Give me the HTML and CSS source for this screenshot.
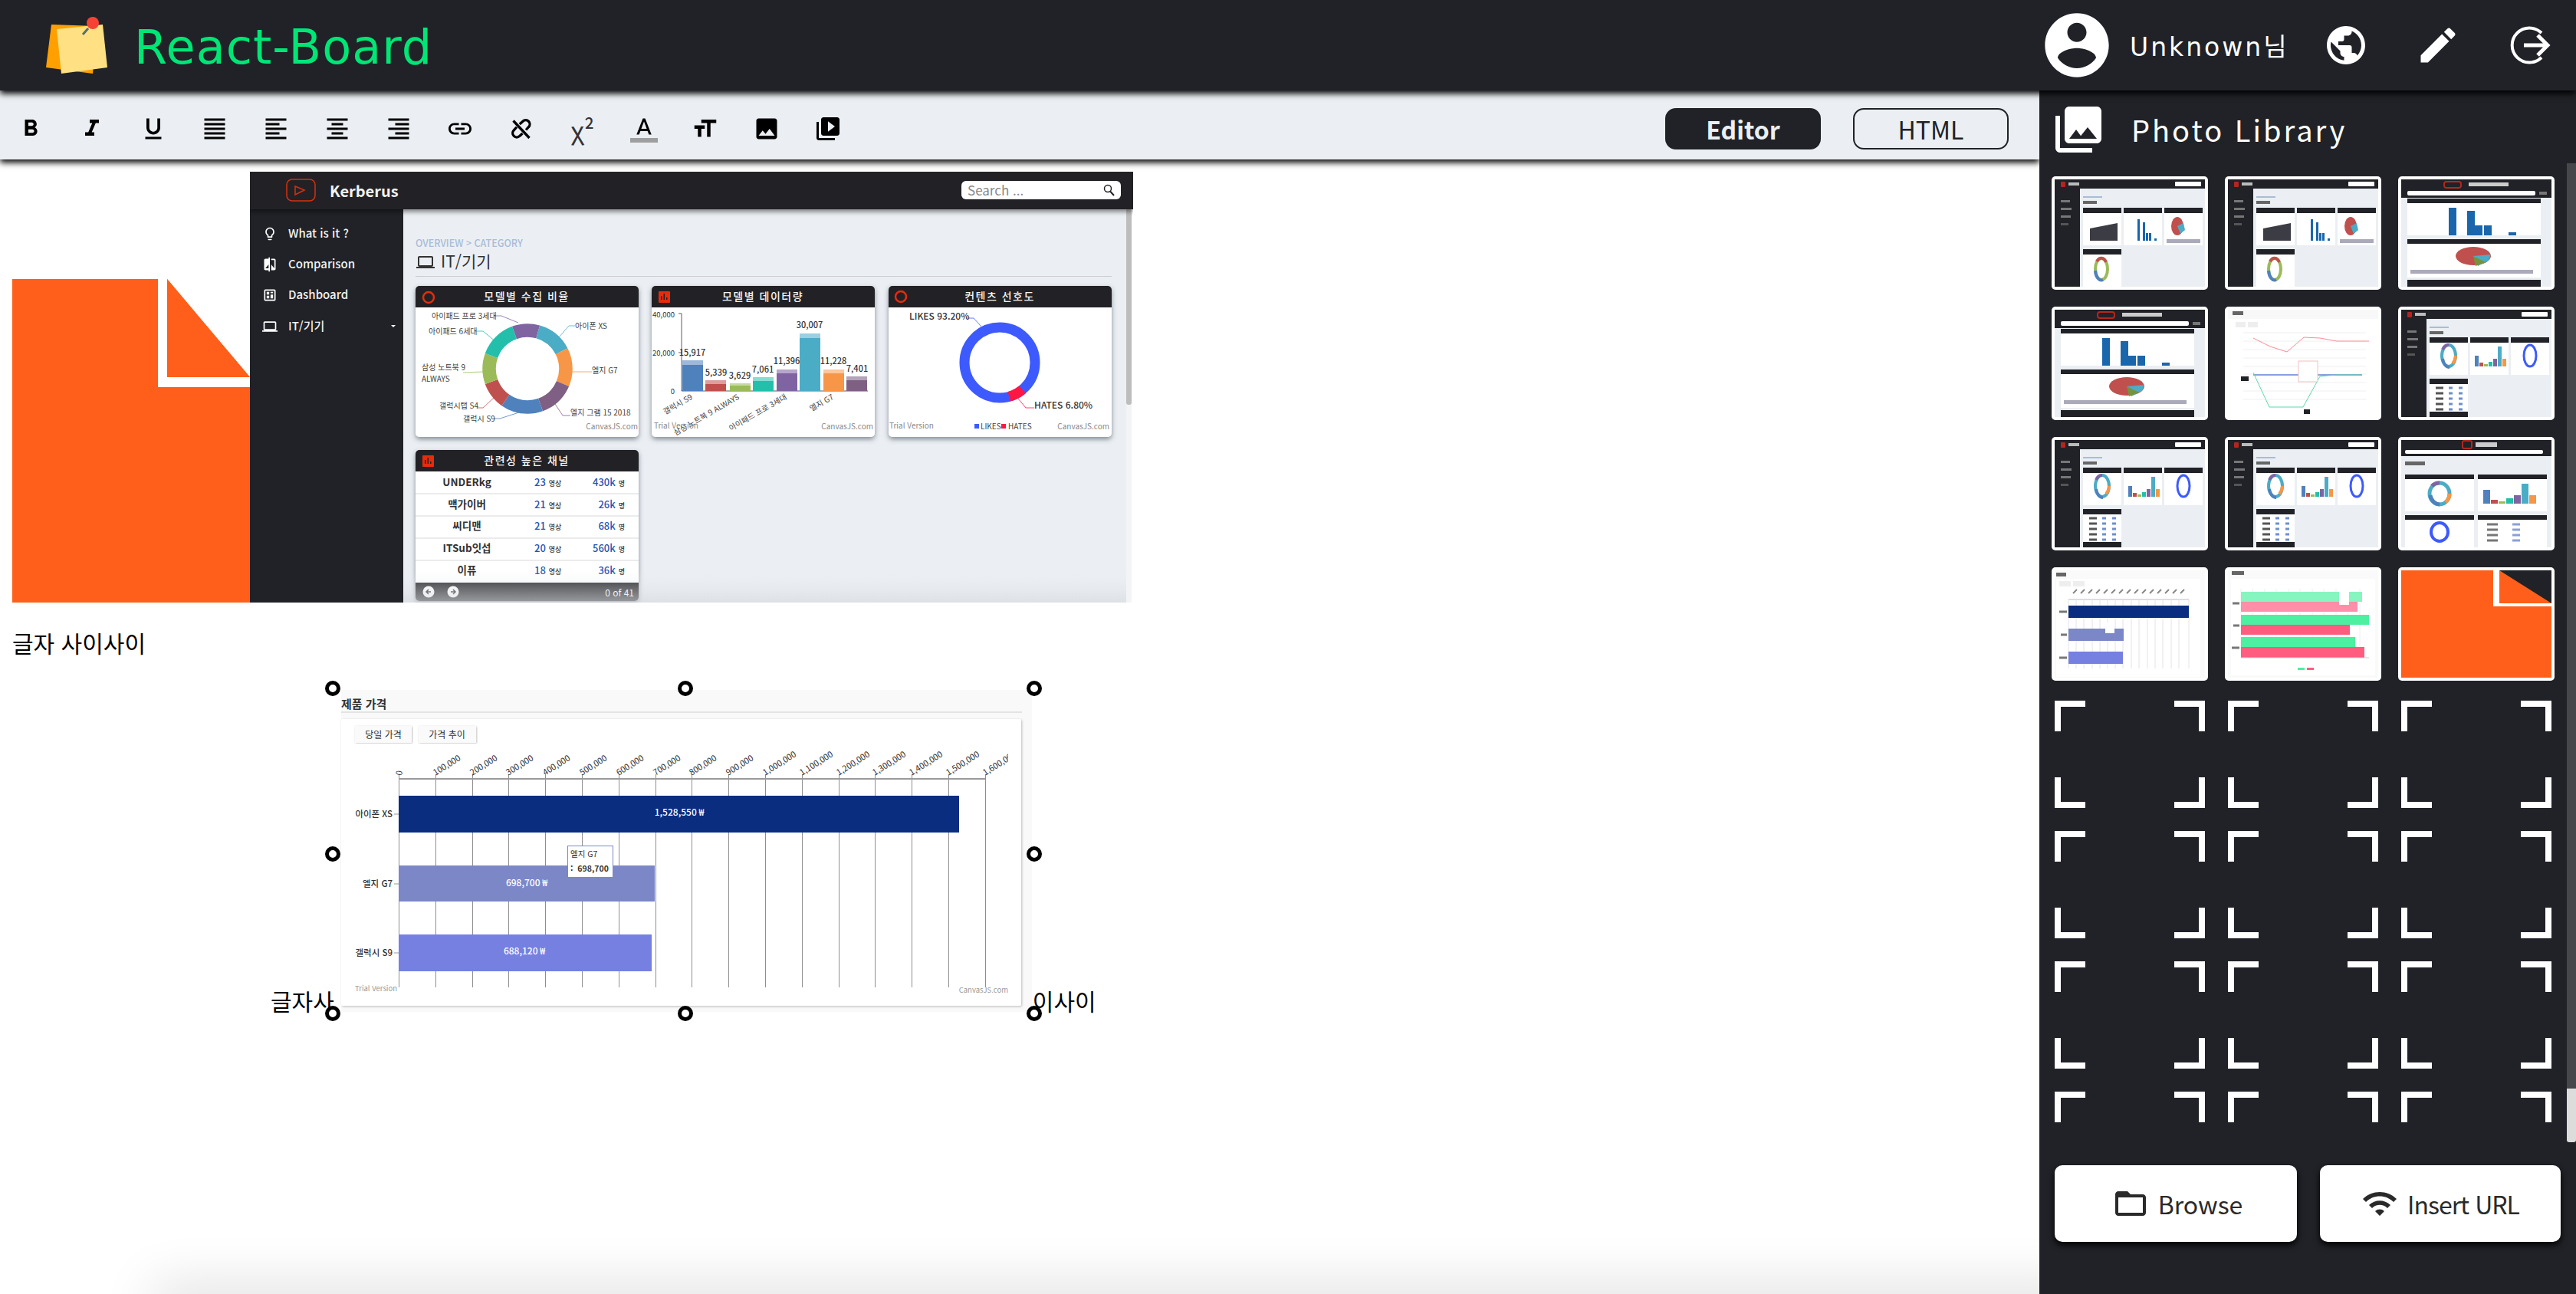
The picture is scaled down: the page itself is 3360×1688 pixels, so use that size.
FILE: index.html
```html
<!DOCTYPE html>
<html lang="ko">
<head>
    <meta charset="UTF-8">
    <title>React-Board</title>
    <link rel="stylesheet" href="styles.css">
</head>
<body>
    <!-- thumbnails and small icons, reused below -->
    <svg class="sprite" aria-hidden="true">
        <symbol id="i-bulb" viewBox="0 0 24 24"><path d="M9 21c0 .55.45 1 1 1h4c.55 0 1-.45 1-1v-1H9v1zm3-19C8.14 2 5 5.14 5 9c0 2.38 1.19 4.47 3 5.74V17c0 .55.45 1 1 1h6c.55 0 1-.45 1-1v-2.26c1.81-1.27 3-3.36 3-5.74 0-3.86-3.14-7-7-7zm2 11.7V16h-4v-2.3C8.48 12.63 7 11.53 7 9c0-2.76 2.24-5 5-5s5 2.24 5 5c0 2.49-1.51 3.65-3 4.7z"/></symbol>
        <symbol id="i-compare" viewBox="0 0 24 24"><path d="M10 3H5c-1.1 0-2 .9-2 2v14c0 1.1.9 2 2 2h5v2h2V1h-2v2zm0 15H5l5-6v6zm9-15h-5v2h5v13l-5-6v9h5c1.1 0 2-.9 2-2V5c0-1.1-.9-2-2-2z"/></symbol>
        <symbol id="i-dash" viewBox="0 0 24 24"><path d="M19 3H5c-1.1 0-2 .9-2 2v14c0 1.1.9 2 2 2h14c1.1 0 2-.9 2-2V5c0-1.1-.9-2-2-2zm0 16H5V5h14v14zM7 7h4v4H7zm6 0h4v2h-4zm0 4h4v6h-4zm-6 2h4v4H7z"/></symbol>
        <symbol id="i-laptop" viewBox="0 0 24 24"><path d="M20 18c1.1 0 2-.9 2-2V6c0-1.1-.9-2-2-2H4c-1.1 0-2 .9-2 2v10c0 1.1.9 2 2 2H0v2h24v-2h-4zM4 6h16v10H4V6z"/></symbol>

        <symbol id="t-shell" viewBox="0 0 196 140">
            <rect width="196" height="140" fill="#ebeff3"/>
            <rect width="33" height="140" fill="#202227"/>
            <rect width="196" height="12" fill="#202227"/>
            <rect x="8" y="3" width="6" height="7" rx="1" fill="#b3261e"/>
            <rect x="18" y="4" width="14" height="4" fill="#bbb"/>
            <rect x="157" y="3" width="34" height="6" rx="1" fill="#fff"/>
            <rect x="8" y="27" width="12" height="3" fill="#777"/>
            <rect x="8" y="37" width="14" height="3" fill="#777"/>
            <rect x="8" y="47" width="13" height="3" fill="#777"/>
            <rect x="8" y="57" width="10" height="3" fill="#555"/>
            <rect x="37" y="22" width="25" height="2" fill="#a9bcd8"/>
            <rect x="37" y="28" width="18" height="4" fill="#666"/>
        </symbol>
        <symbol id="t-dash" viewBox="0 0 196 140">
            <use href="#t-shell"/>
            <rect x="37" y="37" width="50" height="49" fill="#fff"/>
            <rect x="37" y="37" width="50" height="7" fill="#202227"/>
            <path d="M46 80V64l36-7v23z" fill="#3c3c44"/>
            <rect x="90" y="37" width="50" height="49" fill="#fff"/>
            <rect x="90" y="37" width="50" height="7" fill="#202227"/>
            <path d="M108 52h3v28h-3zM115 56h3v24h-3zM119 70h3v10h-3zM123 70h3v10h-3zM130 77h3v3h-3z" fill="#1a66ac"/>
            <rect x="143" y="37" width="50" height="49" fill="#fff"/>
            <rect x="143" y="37" width="50" height="7" fill="#202227"/>
            <ellipse cx="160" cy="61" rx="8" ry="12" fill="#c0504d"/>
            <path d="M160 61l8-4 2 9-6 5z" fill="#4bacc6"/>
            <rect x="146" y="78" width="44" height="5" fill="#aab"/>
            <rect x="37" y="91" width="50" height="49" fill="#fff"/>
            <rect x="37" y="91" width="50" height="7" fill="#202227"/>
            <ellipse cx="61" cy="117" rx="8" ry="14" fill="none" stroke="#9bbb59" stroke-width="4"/>
            <path d="M55 107a8 14 0 0 1 12 1" fill="none" stroke="#c0504d" stroke-width="4"/>
            <path d="M53 119a8 14 0 0 0 10 12" fill="none" stroke="#4f81bd" stroke-width="4"/>
        </symbol>
        <symbol id="t-mob" viewBox="0 0 196 140">
            <rect width="196" height="140" fill="#ebeff3"/>
            <rect width="196" height="24" fill="#202227"/>
            <rect x="56" y="3" width="22" height="8" rx="3" fill="none" stroke="#b3261e" stroke-width="2"/>
            <rect x="88" y="4" width="52" height="5" fill="#ccc"/>
            <rect x="8" y="15" width="167" height="6" rx="2" fill="#fff"/>
            <rect x="180" y="16" width="10" height="4" fill="#777"/>
            <rect x="8" y="25" width="174" height="48" fill="#fff"/>
            <rect x="8" y="25" width="174" height="6" fill="#202227"/>
            <path d="M62 37h10v36H62zM86 41h10v32H86zM96 60h10v13H96zM108 60h10v13h-10zM140 69h10v4h-10z" fill="#1a66ac"/>
            <rect x="8" y="78" width="174" height="50" fill="#fff"/>
            <rect x="8" y="78" width="174" height="6" fill="#202227"/>
            <ellipse cx="94" cy="100" rx="23" ry="12" fill="#c0504d"/>
            <path d="M94 100l23-2-3 8-14 7z" fill="#4bacc6"/>
            <path d="M94 100l16 8-13 5z" fill="#76923c"/>
            <rect x="12" y="118" width="160" height="5" fill="#aab"/>
            <rect x="8" y="131" width="174" height="9" fill="#202227"/>
        </symbol>
        <symbol id="t-line" viewBox="0 0 196 140">
            <rect width="196" height="140" fill="#fff"/>
            <rect width="196" height="12" fill="#f8f8f8"/>
            <rect x="6" y="2" width="14" height="5" fill="#666"/>
            <rect x="10" y="16" width="13" height="7" fill="#eee"/>
            <rect x="26" y="16" width="13" height="7" fill="#eee"/>
            <path d="M20 30h160M20 41h160M20 52h160M20 63h160M20 74h160M20 84h160M20 95h160M20 106h160M20 117h160" stroke="#f0f0f0"/>
            <path d="M33 37l22 11 22 7 22-19 21 1 22 4h42" fill="none" stroke="#ff8a96"/>
            <path d="M33 85h142" stroke="#8aa0e0" stroke-width="2"/>
            <path d="M33 82l21 45h44l22-40 21-2h34" fill="none" stroke="#60d6a8"/>
            <rect x="92" y="67" width="25" height="27" fill="#fff" stroke="#f4c0c0"/>
            <rect x="17" y="87" width="10" height="6" fill="#202227"/>
            <rect x="99" y="130" width="8" height="6" fill="#202227"/>
        </symbol>
        <symbol id="t-it" viewBox="0 0 196 140">
            <use href="#t-shell"/>
            <rect x="37" y="36" width="50" height="49" fill="#fff"/>
            <rect x="37" y="36" width="50" height="7" fill="#202227"/>
            <ellipse cx="62" cy="60" rx="9" ry="14" fill="none" stroke="#4bacc6" stroke-width="4"/>
            <path d="M54 64a9 14 0 0 0 9 11" fill="none" stroke="#4f81bd" stroke-width="4"/>
            <path d="M71 60a9 14 0 0 1-4 10" fill="none" stroke="#f79646" stroke-width="4"/>
            <path d="M54 52a9 14 0 0 1 8-6" fill="none" stroke="#8064a2" stroke-width="4"/>
            <rect x="90" y="36" width="50" height="49" fill="#fff"/>
            <rect x="90" y="36" width="50" height="7" fill="#202227"/>
            <path d="M96 60h5v14h-5z" fill="#4f81bd"/>
            <path d="M102 69h5v5h-5z" fill="#c0504d"/>
            <path d="M108 71h5v3h-5z" fill="#9bbb59"/>
            <path d="M114 68h5v6h-5z" fill="#23bfaa"/>
            <path d="M120 64h5v10h-5z" fill="#8064a2"/>
            <path d="M126 48h5v26h-5z" fill="#4bacc6"/>
            <path d="M132 64h5v10h-5z" fill="#f79646"/>
            <rect x="143" y="36" width="50" height="49" fill="#fff"/>
            <rect x="143" y="36" width="50" height="7" fill="#202227"/>
            <ellipse cx="168" cy="60" rx="8" ry="14" fill="none" stroke="#3d5afe" stroke-width="3"/>
            <rect x="37" y="90" width="50" height="50" fill="#fff"/>
            <rect x="37" y="90" width="50" height="7" fill="#202227"/>
            <path d="M45 102h10M45 109h10M45 116h10M45 123h10M45 130h10" stroke="#555" stroke-width="3"/>
            <path d="M62 102h5M62 109h5M62 116h5M62 123h5M62 130h5M75 102h5M75 109h5M75 116h5M75 123h5M75 130h5" stroke="#6d8fd0" stroke-width="3"/>
            <rect x="37" y="133" width="50" height="7" fill="#202227"/>
        </symbol>
        <symbol id="t-itm" viewBox="0 0 196 140">
            <rect width="196" height="140" fill="#ebeff3"/>
            <rect width="196" height="21" fill="#202227"/>
            <rect x="80" y="1" width="12" height="10" rx="2" fill="none" stroke="#b3261e" stroke-width="2"/>
            <rect x="97" y="3" width="28" height="6" fill="#ccc"/>
            <rect x="5" y="13" width="180" height="5" rx="2" fill="#fff"/>
            <rect x="5" y="28" width="26" height="5" fill="#666"/>
            <rect x="5" y="45" width="90" height="48" fill="#fff"/>
            <rect x="5" y="45" width="90" height="6" fill="#202227"/>
            <ellipse cx="50" cy="70" rx="13" ry="14" fill="none" stroke="#4bacc6" stroke-width="5"/>
            <path d="M38 72a13 14 0 0 0 12 12" fill="none" stroke="#4f81bd" stroke-width="5"/>
            <path d="M63 70a13 14 0 0 1-5 11" fill="none" stroke="#f79646" stroke-width="5"/>
            <path d="M40 60a13 14 0 0 1 10-4" fill="none" stroke="#8064a2" stroke-width="5"/>
            <rect x="100" y="45" width="90" height="48" fill="#fff"/>
            <rect x="100" y="45" width="90" height="6" fill="#202227"/>
            <path d="M107 65h9v18h-9z" fill="#4f81bd"/>
            <path d="M117 78h9v5h-9z" fill="#c0504d"/>
            <path d="M127 80h9v3h-9z" fill="#9bbb59"/>
            <path d="M137 76h9v7h-9z" fill="#23bfaa"/>
            <path d="M147 72h9v11h-9z" fill="#8064a2"/>
            <path d="M157 57h9v26h-9z" fill="#4bacc6"/>
            <path d="M167 72h9v11h-9z" fill="#f79646"/>
            <rect x="5" y="98" width="90" height="42" fill="#fff"/>
            <rect x="5" y="98" width="90" height="6" fill="#202227"/>
            <ellipse cx="50" cy="120" rx="11" ry="12" fill="none" stroke="#3d5afe" stroke-width="4"/>
            <rect x="100" y="98" width="90" height="42" fill="#fff"/>
            <rect x="100" y="98" width="90" height="6" fill="#202227"/>
            <path d="M112 110h14M112 117h14M112 124h14M112 131h14" stroke="#777" stroke-width="3"/>
            <path d="M145 110h10M145 117h10M145 124h10M145 131h10" stroke="#8aa0d8" stroke-width="3"/>
        </symbol>
        <symbol id="t-price" viewBox="0 0 196 140">
            <rect width="196" height="140" fill="#fafafa"/>
            <rect x="2" y="11" width="188" height="128" fill="#fff"/>
            <rect x="2" y="3" width="13" height="5" fill="#666"/>
            <rect x="6" y="14" width="15" height="7" fill="#eee"/>
            <rect x="24" y="14" width="15" height="7" fill="#eee"/>
            <path d="M18 38h157" stroke="#bbb"/>
            <path d="M18 38v90M28 38v90M38 38v90M49 38v90M59 38v90M69 38v90M79 38v90M89 38v90M100 38v90M110 38v90M121 38v90M131 38v90M141 38v90M152 38v90M162 38v90M175 38v90" stroke="#e4e4e4"/>
            <path d="M24 30l5-5M34 30l5-5M44 30l5-5M54 30l5-5M64 30l5-5M74 30l5-5M84 30l5-5M94 30l5-5M104 30l5-5M114 30l5-5M124 30l5-5M134 30l5-5M144 30l5-5M154 30l5-5M164 30l5-5" stroke="#888" stroke-width="2"/>
            <rect x="18" y="46" width="157" height="16" fill="#0a2d80"/>
            <rect x="18" y="76" width="72" height="16" fill="#7c87c8"/>
            <rect x="18" y="106" width="71" height="16" fill="#7680e0"/>
            <rect x="66" y="68" width="12" height="14" fill="#fff"/>
            <path d="M6 54h10M8 84h8M6 114h10" stroke="#777" stroke-width="3"/>
        </symbol>
        <symbol id="t-bars" viewBox="0 0 196 140">
            <rect width="196" height="140" fill="#fafafa"/>
            <rect x="4" y="11" width="188" height="126" fill="#fff"/>
            <rect x="5" y="1" width="16" height="5" fill="#666"/>
            <path d="M17 24v90M32 24v90M48 24v90M63 24v90M79 24v90M94 24v90M110 24v90M125 24v90M141 24v90M156 24v90M172 24v90" stroke="#eee"/>
            <rect x="17" y="28" width="158" height="13" fill="#86f5c0"/>
            <rect x="17" y="41" width="152" height="13" fill="#ff8fa8"/>
            <rect x="17" y="58" width="167" height="13" fill="#4cf0a0"/>
            <rect x="17" y="71" width="142" height="13" fill="#ff5c80"/>
            <rect x="17" y="87" width="149" height="13" fill="#4cf0a0"/>
            <rect x="17" y="100" width="161" height="14" fill="#ff5c80"/>
            <rect x="145" y="25" width="13" height="20" fill="#fff"/>
            <path d="M6 43h9M7 72h8M5 101h10" stroke="#777" stroke-width="3"/>
            <path d="M17 114h167" stroke="#ccc"/>
            <rect x="91" y="127" width="9" height="3" fill="#4cf0a0"/>
            <rect x="103" y="127" width="9" height="3" fill="#ff5c80"/>
        </symbol>
        <symbol id="t-file" viewBox="0 0 196 140" preserveAspectRatio="none">
            <rect width="196" height="140" fill="#ff5f1a"/>
            <path d="M120 0h8v43h68v4h-76z" fill="#fff"/>
            <path d="M128 0h68v43z" fill="#202227"/>
        </symbol>
    </svg>

    <header class="top-bar">
        <svg class="logo" viewBox="0 0 80 74">
            <path d="M7 10L0 66l61 8 5-62z" fill="#ffa000"/>
            <path d="M14 16l60-6 6 56-60 8z" fill="#ffe082"/>
            <path d="M55 15l-7 8" stroke="#546e7a" stroke-width="3"/>
            <ellipse cx="61" cy="8" rx="8" ry="8" fill="#f44336"/>
        </svg>
        <h1 class="brand">React-Board</h1>
        <div class="user-menu">
            <svg class="avatar" viewBox="0 0 24 24"><path d="M12 2C6.48 2 2 6.48 2 12s4.48 10 10 10 10-4.48 10-10S17.52 2 12 2zm0 3c1.66 0 3 1.34 3 3s-1.34 3-3 3-3-1.34-3-3 1.34-3 3-3zm0 14.2c-2.5 0-4.71-1.28-6-3.22.03-1.99 4-3.08 6-3.08 1.99 0 5.97 1.09 6 3.08-1.29 1.94-3.5 3.22-6 3.22z"/></svg>
            <span class="user-name">Unknown님</span>
            <svg class="menu-icon" viewBox="0 0 24 24"><path d="M12 2C6.48 2 2 6.48 2 12s4.48 10 10 10 10-4.48 10-10S17.52 2 12 2zm-1 17.93c-3.95-.49-7-3.85-7-7.93 0-.62.08-1.21.21-1.79L9 15v1c0 1.1.9 2 2 2v1.93zm6.9-2.54c-.26-.81-1-1.39-1.9-1.39h-1v-3c0-.55-.45-1-1-1H8v-2h2c.55 0 1-.45 1-1V7h2c1.1 0 2-.9 2-2v-.41c2.93 1.19 5 4.06 5 7.41 0 2.08-.8 3.97-2.1 5.39z"/></svg>
            <svg class="menu-icon" viewBox="0 0 24 24"><path d="M3 17.25V21h3.75L17.81 9.94l-3.75-3.75L3 17.25zM20.71 7.04c.39-.39.39-1.02 0-1.41l-2.34-2.34c-.39-.39-1.02-.39-1.41 0l-1.83 1.83 3.75 3.75 1.83-1.83z"/></svg>
            <svg class="menu-icon" viewBox="0 0 60 60"><path d="M45 14A22.5 22.5 0 1 0 45 46" fill="none" stroke="#fff" stroke-width="4"/><path d="M22 30h30M40 17l13 13-13 13" fill="none" stroke="#fff" stroke-width="5"/></svg>
        </div>
    </header>

    <main class="workspace">
        <section class="editor">
            <div class="toolbar">
                <div class="tools">
                    <svg class="tool" viewBox="0 0 24 24"><path d="M15.6 10.79c.97-.67 1.65-1.77 1.65-2.79 0-2.26-1.75-4-4-4H7v14h7.04c2.09 0 3.71-1.7 3.71-3.79 0-1.52-.86-2.82-2.15-3.42zM10 6.5h3c.83 0 1.5.67 1.5 1.5s-.67 1.5-1.5 1.5h-3v-3zm3.5 9H10v-3h3.5c.83 0 1.5.67 1.5 1.5s-.67 1.5-1.5 1.5z"/></svg>
                    <svg class="tool" viewBox="0 0 24 24"><path d="M10 4v3h2.21l-3.42 8H6v3h8v-3h-2.21l3.42-8H18V4z"/></svg>
                    <svg class="tool" viewBox="0 0 24 24"><path d="M12 17c3.31 0 6-2.69 6-6V3h-2.5v8c0 1.93-1.57 3.5-3.5 3.5S8.5 12.93 8.5 11V3H6v8c0 3.31 2.69 6 6 6zm-7 2v2h14v-2H5z"/></svg>
                    <svg class="tool" viewBox="0 0 24 24"><path d="M3 21h18v-2H3v2zm0-4h18v-2H3v2zm0-4h18v-2H3v2zm0-4h18V7H3v2zm0-6v2h18V3H3z"/></svg>
                    <svg class="tool" viewBox="0 0 24 24"><path d="M15 15H3v2h12v-2zm0-8H3v2h12V7zM3 13h18v-2H3v2zm0 8h18v-2H3v2zM3 3v2h18V3H3z"/></svg>
                    <svg class="tool" viewBox="0 0 24 24"><path d="M7 15v2h10v-2H7zm-4 6h18v-2H3v2zm0-8h18v-2H3v2zm4-6v2h10V7H7zM3 3v2h18V3H3z"/></svg>
                    <svg class="tool" viewBox="0 0 24 24"><path d="M3 21h18v-2H3v2zm6-4h12v-2H9v2zm-6-4h18v-2H3v2zm6-4h12V7H9v2zM3 3v2h18V3H3z"/></svg>
                    <svg class="tool" viewBox="0 0 24 24"><path d="M3.9 12c0-1.71 1.39-3.1 3.1-3.1h4V7H7c-2.76 0-5 2.24-5 5s2.24 5 5 5h4v-1.9H7c-1.71 0-3.1-1.39-3.1-3.1zM8 13h8v-2H8v2zm9-6h-4v1.9h4c1.71 0 3.1 1.39 3.1 3.1s-1.39 3.1-3.1 3.1h-4V17h4c2.76 0 5-2.24 5-5s-2.24-5-5-5z"/></svg>
                    <svg class="tool" viewBox="0 0 24 24"><path d="M5 5l14 15M10.5 8l2.800-2.500a3.500 3.500 0 0 1 5 5l-2.300 2.500M8 10.500l-2.500 2.800a3.500 3.500 0 0 0 5 5l2.500-2.300" fill="none" stroke="#000" stroke-width="2.200"/></svg>
                    <span class="tool tool-text">χ²</span>
                    <svg class="tool" viewBox="0 0 24 24"><path d="M11 3L5.500 17h2.250l1.120-3h6.250l1.120 3h2.250L13 3h-2zm-1.380 9L12 5.670 14.380 12H9.620z"/><rect y="20" width="24" height="4" fill="#9e9e9e"/></svg>
                    <svg class="tool" viewBox="0 0 24 24"><path d="M21.500 4v3h-5v12h-3V7h-5V4h13zm-19 5h9v3h-3v7h-3v-7h-3V9z"/></svg>
                    <svg class="tool" viewBox="0 0 24 24"><path d="M21 19V5c0-1.100-.9-2-2-2H5c-1.100 0-2 .9-2 2v14c0 1.100.9 2 2 2h14c1.100 0 2-.9 2-2zM8.500 13.500l2.500 3.010L14.500 12l4.500 6H5l3.500-4.500z"/></svg>
                    <svg class="tool" viewBox="0 0 24 24"><path d="M4 6H2v14c0 1.100.9 2 2 2h14v-2H4V6zm16-4H8c-1.100 0-2 .9-2 2v12c0 1.100.9 2 2 2h12c1.100 0 2-.9 2-2V4c0-1.100-.9-2-2-2zm-8 12.500v-9l6 4.500-6 4.500z"/></svg>
                </div>
                <div class="mode-switch">
                    <button class="mode mode-on">Editor</button>
                    <button class="mode">HTML</button>
                </div>
            </div>

            <div class="document">
                <div class="image-row">
                    <svg class="file-image" viewBox="0 0 310 422">
                        <rect width="310" height="422" fill="#ff5f1a"/>
                        <path d="M190 0h12v128h108v13H190z" fill="#fff"/>
                        <path d="M202 0h108v128z" fill="#fff"/>
                        <path d="M202 0l108 128H202z" fill="#ff5f1a"/>
                    </svg>
                    <svg class="shot" viewBox="0 0 1152 562">
                        <defs>
                            <linearGradient id="shot-fade" x1="0" y1="0" x2="0" y2="1"><stop offset="0" stop-color="#ebeff3" stop-opacity="0"/><stop offset="1" stop-color="#d5d8dc"/></linearGradient>
                            <filter id="card-shadow" x="-5%" y="-5%" width="110%" height="115%"><feDropShadow dx="0" dy="3" stdDeviation="3" flood-color="#3a4654" flood-opacity=".6"/></filter>
                            <filter id="bar-shadow" x="-2%" y="-20%" width="104%" height="160%"><feDropShadow dx="0" dy="3" stdDeviation="3" flood-color="#000" flood-opacity=".5"/></filter>
                        </defs>
                        <rect width="1152" height="564" fill="#fff"/>
                        <rect x="200" width="943" height="564" fill="#ebeff3"/>
                        <rect x="1143" y="48" width="7" height="516" fill="#f3f4f5"/>
                        <rect x="1143" y="48" width="7" height="256" rx="3" fill="#bdbdbd"/>
                        <rect y="0" width="200" height="564" fill="#202227"/>

                        <text class="kb-nav" x="50" y="86">What is it ?</text>
                        <text class="kb-nav" x="50" y="126">Comparison</text>
                        <text class="kb-nav" x="50" y="166">Dashboard</text>
                        <text class="kb-nav" x="50" y="207">IT/기기</text>
                        <use href="#i-bulb" x="16" y="71" width="20" height="20" fill="#fff"/>
                        <use href="#i-compare" x="16" y="111" width="20" height="20" fill="#fff"/>
                        <use href="#i-dash" x="16" y="151" width="20" height="20" fill="#fff"/>
                        <use href="#i-laptop" x="16" y="192" width="20" height="20" fill="#fff"/>
                        <path d="M184 200h6l-3 3z" fill="#fff"/>

                        <text class="kb-crumb" x="216" y="98">OVERVIEW &gt; CATEGORY</text>
                        <use href="#i-laptop" x="217" y="106" width="24" height="24" fill="#333"/>
                        <text class="kb-title" x="249" y="125">IT/기기</text>
                        <rect x="216" y="136" width="908" height="1" fill="#c9ccd0"/>

                        <!-- donut card -->
                        <g filter="url(#card-shadow)">
                            <rect x="216" y="149" width="291" height="197" rx="5" fill="#fff"/>
                            <path d="M216 177v-23a5 5 0 0 1 5-5h281a5 5 0 0 1 5 5v23z" fill="#202227"/>
                        </g>
                        <circle cx="233" cy="164" r="7" fill="none" stroke="#e62c0c" stroke-width="2.500"/>
                        <text class="kb-head" x="361" y="168">모델별 수집 비율</text>
                        <g fill="none" stroke-width="17.500" transform="rotate(-90 362 257)">
                            <circle cx="362" cy="257" r="50" pathLength="360" stroke="#8064a2" stroke-dasharray="36 324" stroke-dashoffset="20"/>
                            <circle cx="362" cy="257" r="50" pathLength="360" stroke="#4bacc6" stroke-dasharray="47 313" stroke-dashoffset="-16"/>
                            <circle cx="362" cy="257" r="50" pathLength="360" stroke="#f79646" stroke-dasharray="50 310" stroke-dashoffset="-63"/>
                            <circle cx="362" cy="257" r="50" pathLength="360" stroke="#7f6084" stroke-dasharray="47 313" stroke-dashoffset="-113"/>
                            <circle cx="362" cy="257" r="50" pathLength="360" stroke="#4f81bd" stroke-dasharray="55 305" stroke-dashoffset="-160"/>
                            <circle cx="362" cy="257" r="50" pathLength="360" stroke="#c0504d" stroke-dasharray="35 325" stroke-dashoffset="-215"/>
                            <circle cx="362" cy="257" r="50" pathLength="360" stroke="#9bbb59" stroke-dasharray="40 320" stroke-dashoffset="-250"/>
                            <circle cx="362" cy="257" r="50" pathLength="360" stroke="#23bfaa" stroke-dasharray="50 310" stroke-dashoffset="-290"/>
                        </g>
                        <g fill="none" stroke-width=".8">
                            <path d="M318 188h10l22 9" stroke="#8064a2"/>
                            <path d="M294 208h10l17 14" stroke="#23bfaa"/>
                            <path d="M278 262l26-1" stroke="#9bbb59"/>
                            <path d="M296 308h8l15-14" stroke="#c0504d"/>
                            <path d="M318 322h8l25-8" stroke="#4f81bd"/>
                            <path d="M424 201h-8l-13 15" stroke="#4bacc6"/>
                            <path d="M446 261h-26" stroke="#f79646"/>
                            <path d="M418 318h-10l-10-15" stroke="#7f6084"/>
                        </g>
                        <text class="kb-tiny" x="237" y="192">아이패드 프로 3세대</text>
                        <text class="kb-tiny" x="233" y="212">아이패드 6세대</text>
                        <text class="kb-tiny" x="224" y="259">삼성 노트북 9</text>
                        <text class="kb-tiny" x="224" y="274">ALWAYS</text>
                        <text class="kb-tiny" x="247" y="309">갤럭시탭 S4</text>
                        <text class="kb-tiny" x="278" y="326">갤럭시 S9</text>
                        <text class="kb-tiny" x="424" y="205">아이폰 XS</text>
                        <text class="kb-tiny" x="446" y="263">엘지 G7</text>
                        <text class="kb-tiny" x="418" y="318">엘지 그램 15 2018</text>
                        <text class="kb-mark kb-end" x="506" y="336">CanvasJS.com</text>

                        <!-- bars card -->
                        <g filter="url(#card-shadow)">
                            <rect x="524" y="149" width="291" height="197" rx="5" fill="#fff"/>
                            <path d="M524 177v-23a5 5 0 0 1 5-5h281a5 5 0 0 1 5 5v23z" fill="#202227"/>
                        </g>
                        <rect x="533" y="156" width="15" height="15" rx="1" fill="#e62c0c"/>
                        <path d="M536 167v-5h1.500v5zM539.500 167v-8h1.500v8zM543 167v-3h1.500v3z" fill="#202227"/>
                        <text class="kb-head" x="669" y="168">모델별 데이터량</text>
                        <path d="M563 185v101h243M559 185h4M559 236h4" fill="none" stroke="#333" stroke-width=".8"/>
                        <rect x="564" y="246" width="27" height="40" fill="#4f81bd"/><rect x="564" y="246" width="27" height="6" fill="#9db8da"/>
                        <rect x="594" y="272" width="27" height="14" fill="#c0504d"/><rect x="594" y="272" width="27" height="5" fill="#dc9f9d"/>
                        <rect x="626" y="276" width="27" height="10" fill="#9bbb59"/><rect x="626" y="276" width="27" height="3" fill="#c6d99f"/>
                        <rect x="656" y="268" width="27" height="18" fill="#23bfaa"/><rect x="656" y="268" width="27" height="5" fill="#86dccf"/>
                        <rect x="687" y="258" width="27" height="28" fill="#8064a2"/><rect x="687" y="258" width="27" height="5" fill="#b7a5cb"/>
                        <rect x="717" y="211" width="27" height="75" fill="#4bacc6"/><rect x="717" y="211" width="27" height="6" fill="#9ad0df"/>
                        <rect x="748" y="258" width="27" height="28" fill="#f79646"/><rect x="748" y="258" width="27" height="5" fill="#fbc79d"/>
                        <rect x="778" y="267" width="27" height="19" fill="#7f6084"/><rect x="778" y="267" width="27" height="5" fill="#b4a3b8"/>
                        <text class="kb-tick kb-end" x="554" y="190">40,000</text>
                        <text class="kb-tick kb-end" x="554" y="240">20,000</text>
                        <text class="kb-tick kb-end" x="554" y="290">0</text>
                        <text class="kb-val" x="577" y="240">15,917</text>
                        <text class="kb-val" x="608" y="266">5,339</text>
                        <text class="kb-val" x="639" y="270">3,629</text>
                        <text class="kb-val" x="669" y="262">7,061</text>
                        <text class="kb-val" x="700" y="251">11,396</text>
                        <text class="kb-val" x="730" y="204">30,007</text>
                        <text class="kb-val" x="761" y="251">11,228</text>
                        <text class="kb-val" x="792" y="261">7,401</text>
                        <text class="kb-tiny kb-end" transform="translate(578 296) rotate(-30)">갤럭시 S9</text>
                        <text class="kb-tiny kb-end" transform="translate(639 296) rotate(-30)">삼성 노트북 9 ALWAYS</text>
                        <text class="kb-tiny kb-end" transform="translate(701 296) rotate(-30)">아이패드 프로 3세대</text>
                        <text class="kb-tiny kb-end" transform="translate(762 296) rotate(-30)">엘지 G7</text>
                        <text class="kb-mark" x="527" y="335">Trial Version</text>
                        <text class="kb-mark kb-end" x="813" y="336">CanvasJS.com</text>

                        <!-- likes card -->
                        <g filter="url(#card-shadow)">
                            <rect x="833" y="149" width="291" height="197" rx="5" fill="#fff"/>
                            <path d="M833 177v-23a5 5 0 0 1 5-5h281a5 5 0 0 1 5 5v23z" fill="#202227"/>
                        </g>
                        <circle cx="849" cy="163" r="7" fill="none" stroke="#e62c0c" stroke-width="2.500"/>
                        <text class="kb-head" x="978" y="168">컨텐츠 선호도</text>
                        <circle cx="978" cy="249" r="46" fill="none" stroke="#3d5afe" stroke-width="13"/>
                        <circle cx="978" cy="249" r="46" fill="none" stroke="#ff1744" stroke-width="13" pathLength="360" stroke-dasharray="24.500 335.500" stroke-dashoffset="-140" transform="rotate(-90 978 249)"/>
                        <path d="M934 191h10l10 11" fill="none" stroke="#3d5afe" stroke-width=".8"/>
                        <path d="M1002 296l10 12h11" fill="none" stroke="#ff1744" stroke-width=".8"/>
                        <text class="kb-val kb-start" x="860" y="193">LIKES 93.20%</text>
                        <text class="kb-val kb-start" x="1023" y="309">HATES 6.80%</text>
                        <rect x="945" y="329" width="6" height="6" fill="#3d5afe"/>
                        <text class="kb-tiny" x="953" y="336">LIKES</text>
                        <rect x="980" y="329" width="6" height="6" fill="#ff1744"/>
                        <text class="kb-tiny" x="989" y="336">HATES</text>
                        <text class="kb-mark" x="834" y="335">Trial Version</text>
                        <text class="kb-mark kb-end" x="1121" y="336">CanvasJS.com</text>

                        <!-- channel table -->
                        <g filter="url(#card-shadow)">
                            <rect x="216" y="363" width="291" height="197" rx="5" fill="#fff"/>
                            <path d="M216 391v-23a5 5 0 0 1 5-5h281a5 5 0 0 1 5 5v23z" fill="#202227"/>
                            <path d="M216 536h291v19a5 5 0 0 1-5 5H221a5 5 0 0 1-5-5z" fill="#202227"/>
                        </g>
                        <rect x="225" y="370" width="15" height="15" rx="1" fill="#e62c0c"/>
                        <path d="M228 381v-5h1.500v5zM231.500 381v-8h1.500v8zM235 381v-3h1.500v3z" fill="#202227"/>
                        <text class="kb-head" x="361" y="382">관련성 높은 채널</text>
                        <path d="M216 420h291M216 449h291M216 478h291M216 507h291" stroke="#d8d8d8"/>
                        <text class="kb-name" x="283" y="410">UNDERkg</text>
                        <text class="kb-name" x="283" y="439">맥가이버</text>
                        <text class="kb-name" x="283" y="467">씨디맨</text>
                        <text class="kb-name" x="283" y="496">ITSub잇섭</text>
                        <text class="kb-name" x="283" y="525">이퓨</text>
                        <text class="kb-count" x="371" y="410">23<tspan class="kb-unit" dx="4">영상</tspan></text>
                        <text class="kb-count" x="371" y="439">21<tspan class="kb-unit" dx="4">영상</tspan></text>
                        <text class="kb-count" x="371" y="467">21<tspan class="kb-unit" dx="4">영상</tspan></text>
                        <text class="kb-count" x="371" y="496">20<tspan class="kb-unit" dx="4">영상</tspan></text>
                        <text class="kb-count" x="371" y="525">18<tspan class="kb-unit" dx="4">영상</tspan></text>
                        <text class="kb-count kb-end" x="489" y="410">430k<tspan class="kb-unit" dx="4">명</tspan></text>
                        <text class="kb-count kb-end" x="489" y="439">26k<tspan class="kb-unit" dx="4">명</tspan></text>
                        <text class="kb-count kb-end" x="489" y="467">68k<tspan class="kb-unit" dx="4">명</tspan></text>
                        <text class="kb-count kb-end" x="489" y="496">560k<tspan class="kb-unit" dx="4">명</tspan></text>
                        <text class="kb-count kb-end" x="489" y="525">36k<tspan class="kb-unit" dx="4">명</tspan></text>
                        <circle cx="233" cy="548" r="7.500" fill="#fff"/>
                        <path d="M230 548h6M233 545l-3 3 3 3" fill="none" stroke="#202227" stroke-width="1.500"/>
                        <circle cx="265" cy="548" r="7.500" fill="#fff"/>
                        <path d="M262 548h6M265 545l3 3-3 3" fill="none" stroke="#202227" stroke-width="1.500"/>
                        <text class="kb-page kb-end" x="501" y="554">0 of 41</text>

                        <rect x="200" y="520" width="943" height="44" fill="url(#shot-fade)" opacity=".7"/>

                        <g filter="url(#bar-shadow)"><rect width="1152" height="49" fill="#202227"/></g>
                        <g fill="none" stroke="#d6300f" stroke-width="1.500">
                            <rect x="48" y="10" width="37" height="28" rx="7"/>
                            <path d="M59 19l12 5-12 6z"/>
                        </g>
                        <text class="kb-logo" x="104" y="33">Kerberus</text>
                        <rect x="928" y="12" width="208" height="24" rx="6" fill="#fff"/>
                        <text class="kb-search" x="936" y="31">Search ...</text>
                        <circle cx="1119" cy="22" r="4.500" fill="none" stroke="#222" stroke-width="1.500"/>
                        <path d="M1122 25.500l5 5.500" stroke="#222" stroke-width="2"/>
                    </svg>
                </div>

                <p class="line">글자 사이사이</p>

                <p class="wrapped">글자사<span class="selected-image">
                    <svg class="chart" viewBox="0 0 911 424">
                        <defs>
                            <clipPath id="chart-top"><rect x="0" y="70" width="879" height="60"/></clipPath>
                            <filter id="soft-shadow" x="-2%" y="-2%" width="104%" height="104%"><feDropShadow dx="1" dy="1" stdDeviation="1.500" flood-color="#000" flood-opacity=".25"/></filter>
                        </defs>
                        <rect x="9" y="2" width="901" height="420" fill="#f9f9f9"/>
                        <text class="ch-title" x="9" y="26">제품 가격</text>
                        <rect x="9" y="30" width="888" height="2" fill="#e4e4e4"/>
                        <rect x="9" y="40" width="887" height="374" rx="2" fill="#fff" filter="url(#soft-shadow)"/>
                        <rect x="27" y="49" width="74" height="22" fill="#fafafa" filter="url(#soft-shadow)"/>
                        <rect x="110" y="49" width="75" height="22" fill="#fafafa" filter="url(#soft-shadow)"/>
                        <text class="ch-btn" x="64" y="65">당일 가격</text>
                        <text class="ch-btn" x="147" y="65">가격 추이</text>

                        <path class="ch-grid" d="M84 112v278M132 112v278M180 112v278M227 112v278M275 112v278M323 112v278M371 112v278M419 112v278M466 112v278M514 112v278M562 112v278M610 112v278M658 112v278M705 112v278M753 112v278M801 112v278M849 112v278"/>
                        <rect x="84" y="117" width="765" height="2" fill="#9a9a9a"/>

                        <g clip-path="url(#chart-top)">
                            <text class="ch-tick" transform="translate(88 114) rotate(-80)">0</text>
                            <text class="ch-tick" transform="translate(132 114) rotate(-32)">100,000</text>
                            <text class="ch-tick" transform="translate(180 114) rotate(-32)">200,000</text>
                            <text class="ch-tick" transform="translate(227 114) rotate(-32)">300,000</text>
                            <text class="ch-tick" transform="translate(275 114) rotate(-32)">400,000</text>
                            <text class="ch-tick" transform="translate(323 114) rotate(-32)">500,000</text>
                            <text class="ch-tick" transform="translate(371 114) rotate(-32)">600,000</text>
                            <text class="ch-tick" transform="translate(419 114) rotate(-32)">700,000</text>
                            <text class="ch-tick" transform="translate(466 114) rotate(-32)">800,000</text>
                            <text class="ch-tick" transform="translate(514 114) rotate(-32)">900,000</text>
                            <text class="ch-tick" transform="translate(562 114) rotate(-32)">1,000,000</text>
                            <text class="ch-tick" transform="translate(610 114) rotate(-32)">1,100,000</text>
                            <text class="ch-tick" transform="translate(658 114) rotate(-32)">1,200,000</text>
                            <text class="ch-tick" transform="translate(705 114) rotate(-32)">1,300,000</text>
                            <text class="ch-tick" transform="translate(753 114) rotate(-32)">1,400,000</text>
                            <text class="ch-tick" transform="translate(801 114) rotate(-32)">1,500,000</text>
                            <text class="ch-tick" transform="translate(849 114) rotate(-32)">1,600,000</text>
                        </g>

                        <rect x="84" y="140" width="731" height="48" fill="#0a2d80"/>
                        <rect x="84" y="231" width="334" height="47" fill="#7c87c8"/>
                        <rect x="84" y="321" width="330" height="48" fill="#7680e0"/>
                        <text class="ch-bar" x="450" y="166">1,528,550 ₩</text>
                        <text class="ch-bar" x="251" y="258">698,700 ₩</text>
                        <text class="ch-bar" x="248" y="347">688,120 ₩</text>
                        <path d="M78 164h6M78 255h6M78 345h6" stroke="#999"/>
                        <text class="ch-label" x="76" y="168">아이폰 XS</text>
                        <text class="ch-label" x="76" y="259">엘지 G7</text>
                        <text class="ch-label" x="76" y="349">갤럭시 S9</text>

                        <rect x="304.500" y="205.500" width="59" height="41" fill="#fff" stroke="#7c87c8"/>
                        <text class="ch-tip" x="308" y="220">엘지 G7</text>
                        <text class="ch-tip ch-tip-bold" x="308" y="239">: &#160;698,700</text>

                        <text class="ch-mark" x="27" y="395">Trial Version</text>
                        <text class="ch-mark ch-mark-end" x="879" y="397">CanvasJS.com</text>
                    </svg>
                    <i class="handle h-tl"></i><i class="handle h-tc"></i><i class="handle h-tr"></i>
                    <i class="handle h-ml"></i><i class="handle h-mr"></i>
                    <i class="handle h-bl"></i><i class="handle h-bc"></i><i class="handle h-br"></i>
                </span>이사이</p>
            </div>
            <div class="bottom-glow"></div>
        </section>

        <aside class="library">
            <div class="library-head">
                <svg class="library-icon" viewBox="0 0 24 24"><path d="M22 16V4c0-1.100-.9-2-2-2H8c-1.100 0-2 .9-2 2v12c0 1.100.9 2 2 2h12c1.100 0 2-.9 2-2zm-11-4l2.030 2.710L16 11l4 5H8l3-4zM2 6v14c0 1.100.9 2 2 2h14v-2H4V6H2z"/></svg>
                <h2 class="library-title">Photo Library</h2>
            </div>
            <div class="library-body">
                <div class="thumbs">
                    <div class="thumb"><svg viewBox="0 0 196 140"><use href="#t-dash"/></svg></div>
                    <div class="thumb"><svg viewBox="0 0 196 140"><use href="#t-dash"/></svg></div>
                    <div class="thumb"><svg viewBox="0 0 196 140"><use href="#t-mob"/></svg></div>
                    <div class="thumb"><svg viewBox="0 0 196 140"><use href="#t-mob"/></svg></div>
                    <div class="thumb"><svg viewBox="0 0 196 140"><use href="#t-line"/></svg></div>
                    <div class="thumb"><svg viewBox="0 0 196 140"><use href="#t-it"/></svg></div>
                    <div class="thumb"><svg viewBox="0 0 196 140"><use href="#t-it"/></svg></div>
                    <div class="thumb"><svg viewBox="0 0 196 140"><use href="#t-it"/></svg></div>
                    <div class="thumb"><svg viewBox="0 0 196 140"><use href="#t-itm"/></svg></div>
                    <div class="thumb"><svg viewBox="0 0 196 140"><use href="#t-price"/></svg></div>
                    <div class="thumb"><svg viewBox="0 0 196 140"><use href="#t-bars"/></svg></div>
                    <div class="thumb"><svg viewBox="0 0 196 140"><use href="#t-file"/></svg></div>
                    <div class="thumb-empty"></div><div class="thumb-empty"></div><div class="thumb-empty"></div>
                    <div class="thumb-empty"></div><div class="thumb-empty"></div><div class="thumb-empty"></div>
                    <div class="thumb-empty"></div><div class="thumb-empty"></div><div class="thumb-empty"></div>
                    <div class="thumb-empty"></div><div class="thumb-empty"></div><div class="thumb-empty"></div>
                </div>
                <div class="scrollbar"><div class="scrollbar-thumb"></div></div>
            </div>
            <div class="library-actions">
                <button class="action action-browse">
                    <svg viewBox="0 0 24 24"><path d="M20 6h-8l-2-2H4c-1.100 0-1.990.9-1.990 2L2 18c0 1.100.9 2 2 2h16c1.100 0 2-.9 2-2V8c0-1.100-.9-2-2-2zm0 12H4V8h16v10z"/></svg>
                    Browse
                </button>
                <button class="action action-url">
                    <svg viewBox="0 0 24 24"><path d="M1 9l2 2c4.970-4.970 13.030-4.970 18 0l2-2C16.930 2.930 7.080 2.930 1 9zm8 8l3 3 3-3c-1.650-1.660-4.340-1.660-6 0zm-4-4l2 2c2.760-2.760 7.240-2.760 10 0l2-2C15.140 9.140 8.870 9.140 5 13z"/></svg>
                    Insert URL
                </button>
            </div>
        </aside>
    </main>
</body>
</html>
```

FILE: styles.css
```css
* {
    margin: 0;
    padding: 0;
    box-sizing: border-box;
}
html, body {
    width: 3360px;
    height: 1688px;
    overflow: hidden;
}
body {
    display: flex;
    flex-direction: column;
    background: #fff;
    font-family: "Noto Sans CJK KR", "Noto Sans", sans-serif;
    color: #000;
}
.sprite {
    display: none;
}

/* top bar */
.top-bar {
    height: 118px;
    flex: none;
    display: flex;
    align-items: center;
    padding: 0 30px 0 60px;
    background: #202227;
    position: relative;
    z-index: 3;
    box-shadow: 0 4px 8px #000;
}
.logo {
    width: 80px;
    height: 74px;
}
.brand {
    margin: 4px 0 0 35px;
    font: 400 62px "DejaVu Sans", sans-serif;
    letter-spacing: 1.100px;
    color: #00e676;
}
.user-menu {
    margin-left: auto;
    display: flex;
    align-items: center;
}
.avatar {
    width: 100px;
    height: 100px;
    fill: #fff;
}
.user-name {
    width: 252px;
    margin-left: 19px;
    font: 33px "DejaVu Sans", "Noto Sans CJK KR", sans-serif;
    letter-spacing: 3px;
    color: #fff;
}
.menu-icon {
    width: 60px;
    height: 60px;
    fill: #fff;
}
.menu-icon + .menu-icon {
    margin-left: 60px;
}

/* layout */
.workspace {
    flex: 1;
    display: flex;
    min-height: 0;
}
.editor {
    flex: 1;
    min-width: 0;
    position: relative;
    overflow: hidden;
}

/* toolbar */
.toolbar {
    height: 90px;
    display: flex;
    align-items: center;
    justify-content: space-between;
    padding: 10px 40px 0 22px;
    background: #ebeff3;
    position: relative;
    z-index: 1;
    box-shadow: 0 4px 8px #000;
}
.tools {
    display: flex;
    gap: 44px;
}
.tool {
    width: 36px;
    height: 36px;
    display: block;
}
.tool-text {
    font-size: 32px;
    line-height: 36px;
    text-align: center;
    color: #333;
}
.mode-switch {
    display: flex;
    gap: 42px;
}
.mode {
    width: 203px;
    height: 54px;
    border: 2px solid #202227;
    border-radius: 14px;
    background: none;
    font: 32px "Noto Sans CJK KR", sans-serif;
    color: #202227;
}
.mode-on {
    background: #202227;
    color: #ebeff3;
    font-weight: 700;
}

/* document */
.document {
    padding: 16px;
}
.image-row {
    display: flex;
    align-items: flex-end;
}
.file-image {
    width: 310px;
    height: 422px;
    display: block;
}
.shot {
    width: 1152px;
    height: 562px;
    display: block;
}
.line {
    margin-top: 30px;
    font-size: 30px;
}
.wrapped {
    margin-top: 38px;
    padding-left: 337px;
    font-size: 30px;
    white-space: nowrap;
}
.selected-image {
    display: inline-block;
    vertical-align: -4px;
    position: relative;
    width: 911px;
    height: 424px;
}
.chart {
    width: 911px;
    height: 424px;
    display: block;
}
.handle {
    position: absolute;
    width: 20px;
    height: 20px;
    border: 5px solid #000;
    border-radius: 50%;
    background: #fff;
    margin: -10px 0 0 -10px;
}
.h-tl { left: -2px; top: 0; }
.h-tc { left: 458px; top: 0; }
.h-tr { left: 913px; top: 0; }
.h-ml { left: -2px; top: 216px; }
.h-mr { left: 913px; top: 216px; }
.h-bl { left: -2px; top: 424px; }
.h-bc { left: 458px; top: 424px; }
.h-br { left: 913px; top: 424px; }

.bottom-glow {
    position: absolute;
    left: 210px;
    right: -60px;
    bottom: -30px;
    height: 30px;
    box-shadow: 0 0 70px 10px rgba(0, 0, 0, .14);
}

/* text inside the screenshot */
.shot text {
    font-family: "Noto Sans CJK KR", sans-serif;
}
.kb-nav { font-size: 15px; font-weight: 500; fill: #f2f2f2; }
.kb-crumb { font-size: 12.500px; font-weight: 500; fill: #a9bcd8; }
.kb-title { font-size: 21px; fill: #333; }
.kb-head { font-size: 14px; font-weight: 500; letter-spacing: 1.500px; fill: #f5f5f5; text-anchor: middle; }
.kb-tiny { font-size: 10px; fill: #444; }
.kb-mark { font-size: 10px; fill: #888; }
.kb-end { text-anchor: end; }
.kb-tick { font-size: 9.500px; fill: #333; }
.kb-val { font-size: 11px; font-weight: 500; fill: #333; text-anchor: middle; }
.kb-val.kb-start { font-size: 12px; text-anchor: start; }
.kb-name { font-size: 13.500px; font-weight: 700; fill: #333; text-anchor: middle; }
.kb-count { font-size: 13px; font-weight: 500; fill: #1f56b5; }
.kb-unit { font-size: 9px; fill: #333; }
.kb-page { font-size: 12px; fill: #fff; }
.kb-logo { font-size: 20px; font-weight: 700; fill: #f2f2f2; }
.kb-search { font-size: 17px; fill: #888; }

/* text inside the price chart */
.chart text {
    font-family: "Noto Sans CJK KR", sans-serif;
}
.ch-title { font-size: 15px; font-weight: 700; fill: #333; }
.ch-btn { font-size: 12px; fill: #333; text-anchor: middle; }
.ch-grid { stroke: #8f8f8f; stroke-width: 1; transform: translateX(.5px); }
.ch-tick { font-size: 11px; fill: #333; }
.ch-bar { font-size: 12px; font-weight: 500; fill: #fff; text-anchor: middle; }
.ch-label { font-size: 11.500px; font-weight: 500; fill: #333; text-anchor: end; }
.ch-tip { font-size: 10.500px; fill: #333; }
.ch-tip-bold { font-weight: 700; }
.ch-mark { font-size: 9.500px; fill: #999; }
.ch-mark-end { text-anchor: end; }

/* photo library */
.library {
    width: 700px;
    flex: none;
    background: #202227;
    position: relative;
    z-index: 2;
    color: #fff;
}
.library-head {
    height: 95px;
    display: flex;
    align-items: center;
    padding: 6px 0 0 15px;
}
.library-icon {
    width: 72px;
    height: 72px;
    fill: #fff;
}
.library-title {
    margin-left: 33px;
    font-size: 38px;
    font-weight: 400;
    letter-spacing: 3px;
}
.library-body {
    height: 1277px;
    display: flex;
    justify-content: space-between;
    align-items: flex-start;
}
.thumbs {
    height: 1251px;
    overflow: hidden;
    display: grid;
    grid-template-columns: repeat(3, 204px);
    grid-auto-rows: 148px;
    gap: 22px;
    padding: 17px 0 0 16px;
}
.thumb {
    padding: 4px;
    background: #fff;
    border-radius: 5px;
}
.thumb svg {
    display: block;
    width: 196px;
    height: 140px;
    filter: blur(.6px);
}
/* empty slot: white corner marks */
.thumb-empty {
    margin: 4px;
    background:
        linear-gradient(#fff, #fff) 0 0 / 40px 8px,
        linear-gradient(#fff, #fff) 0 0 / 8px 40px,
        linear-gradient(#fff, #fff) 100% 0 / 40px 8px,
        linear-gradient(#fff, #fff) 100% 0 / 8px 40px,
        linear-gradient(#fff, #fff) 0 100% / 40px 8px,
        linear-gradient(#fff, #fff) 0 100% / 8px 40px,
        linear-gradient(#fff, #fff) 100% 100% / 40px 8px,
        linear-gradient(#fff, #fff) 100% 100% / 8px 40px;
    background-repeat: no-repeat;
}
.scrollbar {
    width: 12px;
    height: 100%;
    background: #dcdcdc;
    border-radius: 0 0 3px 3px;
}
.scrollbar-thumb {
    height: 1207px;
    background: #46474a;
}
.library-actions {
    display: flex;
    gap: 30px;
    padding: 30px 0 0 20px;
}
.action {
    height: 100px;
    display: flex;
    align-items: center;
    justify-content: center;
    gap: 12px;
    border: none;
    border-radius: 10px;
    background: #fff;
    font: 32px "Noto Sans CJK KR", sans-serif;
    color: #2a2a2a;
    box-shadow: 0 4px 8px #000;
}
.action svg {
    width: 48px;
    height: 48px;
    fill: #2a2a2a;
}
.action-browse {
    width: 316px;
    padding-left: 4px;
}
.action-url {
    width: 314px;
    letter-spacing: -1px;
}
```
